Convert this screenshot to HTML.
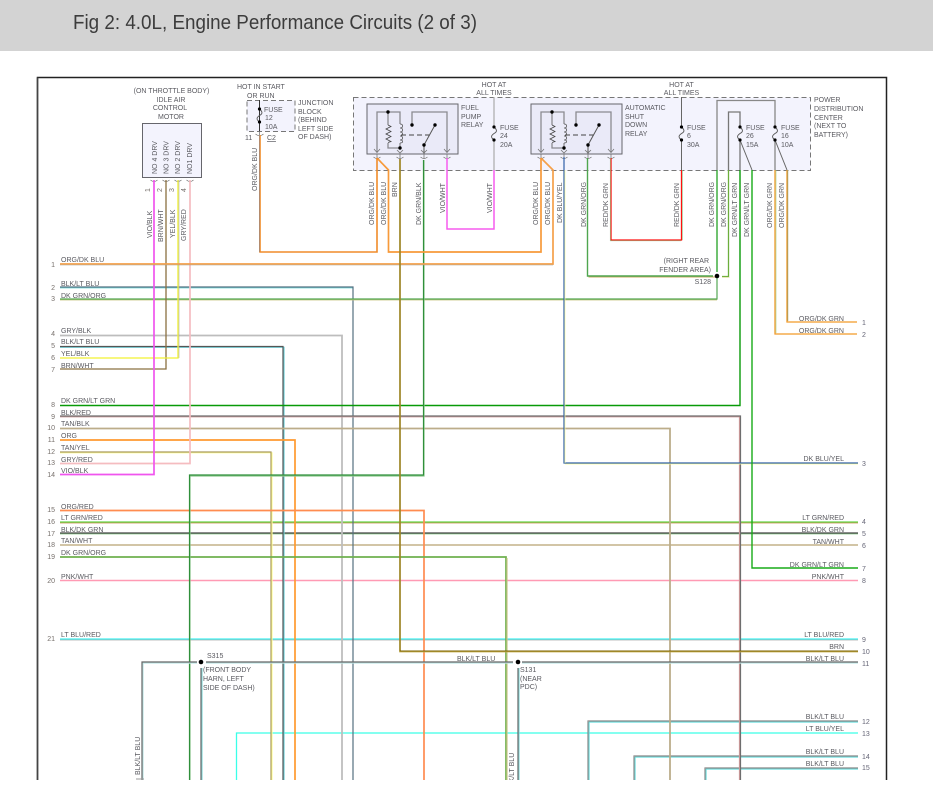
<!DOCTYPE html>
<html><head><meta charset="utf-8"><title>Fig 2</title>
<style>
html,body{margin:0;padding:0;background:#fff;width:933px;height:799px;overflow:hidden}
svg{display:block;position:absolute;left:0;top:0}
text{font-family:"Liberation Sans",sans-serif;font-size:7px;fill:#5a5a60}
path{fill:none;stroke-linejoin:miter}
.e{text-anchor:end}.m{text-anchor:middle}
.n{fill:#77706c;font-size:7px}
.r{fill:#667}
</style></head><body>
<svg width="933" height="799" viewBox="0 0 933 799" xmlns="http://www.w3.org/2000/svg">
<defs>
<g id="relay">
<rect x="367" y="104" width="91" height="50" fill="#eaeaf8" stroke="#66666c" stroke-width="1"/>
<path d="M377 152V112H400V124M400 143V148M388 112V125M388 143V148H400" stroke="#8a8a90" stroke-width="1.300"/>
<path d="M412 125V112H447V152" stroke="#8a8a90" stroke-width="1.300"/>
<path d="M388 125l3 1.500l-5 2.500l5 2.500l-5 2.500l5 2.500l-5 2.500l5 2.500l-3 1" stroke="#444" stroke-width=".8"/>
<path d="M400 124c3.500 0 3.500 4 0 4c3.500 0 3.500 4 0 4c3.500 0 3.500 4 0 4c3.500 0 3.500 4 0 4c3.500 0 3.500 3 0 3" stroke="#555" stroke-width=".8"/>
<path d="M401 135H432" stroke="#444" stroke-width="1" stroke-dasharray="5 3"/>
<path d="M424 145L435 125M424 145V154" stroke="#555" stroke-width="1"/>
<circle cx="388" cy="112" r="1.700" fill="#000"/><circle cx="400" cy="148" r="1.700" fill="#000"/>
<circle cx="412" cy="125" r="1.700" fill="#000"/><circle cx="424" cy="145" r="1.700" fill="#000"/><circle cx="435" cy="125" r="1.700" fill="#000"/>
<path d="M374 149l3 3.500l3-3.500M397 150l3 3l3-3M421 150l3 3l3-3M444 149l3 3.500l3-3.500" stroke="#777" stroke-width=".8"/>
<path d="M373.500 157q3.500 3 7 0M396.500 157q3.500 3 7 0M420.500 157q3.500 3 7 0M443.500 157q3.500 3 7 0M377 154v5M400 154v5M424 154v5M447 154v5" stroke="#777" stroke-width=".8"/>
</g>
<g id="fuse">
<path d="M0 0c3.500 3 3 5 0 6.500c-3 2-3.500 4 0 6.500" stroke="#555" stroke-width=".9"/>
<circle cx="0" cy="0" r="1.600" fill="#000"/><circle cx="0" cy="13" r="1.600" fill="#000"/>
</g>
</defs>

<!-- header -->
<rect x="0" y="0" width="933" height="51" fill="#d3d3d3"/>
<text x="73" y="29" textLength="404" lengthAdjust="spacingAndGlyphs" style="font-size:20px;fill:#3c3c3c">Fig 2: 4.0L, Engine Performance Circuits (2 of 3)</text>

<!-- boxes -->
<rect x="353.500" y="97.500" width="457" height="73" fill="#f3f3fd" stroke="#777" stroke-width="1" stroke-dasharray="5 3"/>
<rect x="247" y="100.500" width="48" height="31" fill="#f3f3fd" stroke="#777" stroke-width="1" stroke-dasharray="5 3"/>
<rect x="142.500" y="123.500" width="59" height="54" fill="#f3f3fd" stroke="#66666c" stroke-width="1"/>
<use href="#relay"/>
<use href="#relay" x="164"/>

<!-- upper gray/dark feeds -->
<path d="M259.500 100V132" stroke="#333" stroke-width="1"/>
<path d="M494 97V127M494 140V170" stroke="#aaa" stroke-width="1.200"/>
<path d="M681.500 97V127M681.500 140V170" stroke="#666" stroke-width="1"/>
<path d="M717 170V100.500H775V127M775 140V170" stroke="#888" stroke-width="1.300"/>
<path d="M728.500 170V112H740V127M740 140V170" stroke="#777" stroke-width="1.300"/>
<path d="M740 140L752 170M775 140L787 170" stroke="#666" stroke-width="1"/>
<use href="#fuse" x="259.500" y="109"/>
<use href="#fuse" x="494" y="127"/>
<use href="#fuse" x="681.500" y="127"/>
<use href="#fuse" x="740" y="127"/>
<use href="#fuse" x="775" y="127"/>
<path d="M255.500 134q4 3.500 8 0M259.500 131v5M150.500 180q3.500 3 7 0M162.500 180q3.500 3 7 0M174.500 180q3.500 3 7 0M186.500 180q3.500 3 7 0" stroke="#777" stroke-width=".8"/>

<!-- wires: tracer underlay then main colour -->
<g stroke-width="1.200">
<!-- long horizontals to right -->
<path d="M60 522.800H858" stroke="#c98a4c"/><path d="M60 522H858" stroke="#66d84a"/>
<path d="M60 533.800H858" stroke="#8ccc8c"/><path d="M60 533H858" stroke="#444"/>
<path d="M60 545H858" stroke="#cbbd9a" stroke-width="1.800"/>
<path d="M60 580.500H858" stroke="#ff9ab4" stroke-width="1.400"/>
<path d="M60 639.800H858" stroke="#aaa"/><path d="M60 639H858" stroke="#44f2f2"/>
<!-- lower right -->
<path d="M236.500 780V733H858" stroke="#3affe8" stroke-width="1.300"/>
<path d="M589 722V780M589 722H858" stroke="#66dddd"/><path d="M588 780V721H858" stroke="#888"/>
<path d="M635 757V780M635 757H858" stroke="#66dddd"/><path d="M634 780V756H858" stroke="#888"/>
<path d="M706 769V780M706 769H858" stroke="#66dddd"/><path d="M705 780V768H858" stroke="#888"/>
<!-- left groups -->
<path d="M60 287.800H353" stroke="#70dada"/><path d="M60 287H353V780" stroke="#557080"/>
<path d="M60 299.800H717" stroke="#c4c27a"/><path d="M60 299H717V276" stroke="#55a855"/>
<path d="M60 335.500H342V780" stroke="#bdbdbd" stroke-width="1.800"/>
<path d="M60 347.300H284V780" stroke="#6fd0d8"/><path d="M60 346.500H283V780" stroke="#555"/>
<path d="M60 405.500H740V170" stroke="#089a08" stroke-width="1.400"/>
<path d="M60 416.800H739.500V780" stroke="#d09a9a"/><path d="M60 416H740.500V780" stroke="#6e6e6e"/>
<path d="M60 428.500H670V780" stroke="#bcad8a" stroke-width="1.800"/>
<path d="M60 440H295V780" stroke="#ff9a30" stroke-width="1.700"/>
<path d="M60 452.800H272V780" stroke="#ffff99"/><path d="M60 452H271V780" stroke="#a99b60"/>
<path d="M60 510.500H424V780" stroke="#ff8c50" stroke-width="1.700"/>
<path d="M60 557H506V780" stroke="#6fb04f" stroke-width="1.700"/><path d="M507 558V780" stroke="#c9c68a"/>
<path d="M60 463.500H190V180" stroke="#f5bcc0" stroke-width="1.700"/>
<path d="M60 369H166V180" stroke="#8a7040" stroke-width="1.300"/>
<path d="M60 358H178V180" stroke="#f2f230" stroke-width="1.300"/>
<path d="M179 180V358" stroke="#aaa" stroke-width=".6"/>
<path d="M190 780V476H424V160" stroke="#8fc98f"/><path d="M189.500 780V475H423.500V160" stroke="#2f8f3a"/>
<path d="M60 474.500H154V180" stroke="#f055ee" stroke-width="1.700"/>
<!-- org/dk blu -->
<path d="M60 264H553V170L541 158" stroke="#f5a04a" stroke-width="1.700"/>
<path d="M60 265H553" stroke="#a8a090" stroke-width=".6"/>
<path d="M541 158V252H388.500V170L377 158" stroke="#f79a3a" stroke-width="1.700"/>
<path d="M377 158V252H260V135" stroke="#f08c2a" stroke-width="1.600"/>
<path d="M259.300 135V252" stroke="#8a8a9a" stroke-width=".6"/>
<path d="M400 159V651.500H858" stroke="#c6b050" stroke-width="1.700"/>
<path d="M400 159V651H858" stroke="#7a6000" stroke-width=".9"/>
<path d="M447 158V229H494V170" stroke="#f65cee" stroke-width="1.500"/>
<path d="M565 463.800H858" stroke="#ffff99"/><path d="M564 157V463H858" stroke="#3060a8"/>
<path d="M565 170V463" stroke="#ffff99" stroke-width=".7"/>
<path d="M588.500 277H716" stroke="#cda860" stroke-width=".9"/>
<path d="M587.500 158V276H713" stroke="#4fa64f" stroke-width="1.400"/>
<path d="M611 158V240H681.500V170" stroke="#ff1010" stroke-width="1.300"/>
<path d="M610.300 158V240.800H681M682.400 170V240" stroke="#8ccc8c" stroke-width=".7" opacity=".9"/>
<path d="M717 170V272" stroke="#22a022" stroke-width="1.300"/>
<path d="M722 276.500H728.500V170" stroke="#6cae3c" stroke-width="1.300"/>
<path d="M722 277.300H729.500" stroke="#dd9" stroke-width=".7"/>
<path d="M752 170V568H858" stroke="#18ab18" stroke-width="1.400"/>
<path d="M775 170V334H857" stroke="#f29a28" stroke-width="1.300"/>
<path d="M776 170V333" stroke="#9ccc88" stroke-width=".6"/>
<path d="M787 170V322H857" stroke="#f29a28" stroke-width="1.300"/>
<path d="M787.800 170V321" stroke="#9c9c68" stroke-width=".8"/>
<!-- splice bus -->
<path d="M143 780V663H197M206 663H513M522 663H858" stroke="#bfe6e6"/>
<path d="M142 780V662H197M206 662H513M522 662H858" stroke="#666"/>
<path d="M202 668V780M519 668V780" stroke="#88dddd"/>
<path d="M201 668V780M518 668V780" stroke="#666"/>
</g>
<circle cx="201" cy="662" r="2.300" fill="#000"/><circle cx="518" cy="662" r="2.300" fill="#000"/><circle cx="717" cy="276" r="2.300" fill="#000"/>

<!-- left labels -->
<text x="61" y="262">ORG/DK BLU</text><text x="61" y="286">BLK/LT BLU</text><text x="61" y="298">DK GRN/ORG</text>
<text x="61" y="333">GRY/BLK</text><text x="61" y="344">BLK/LT BLU</text><text x="61" y="356">YEL/BLK</text><text x="61" y="368">BRN/WHT</text>
<text x="61" y="403">DK GRN/LT GRN</text><text x="61" y="415">BLK/RED</text><text x="61" y="426">TAN/BLK</text><text x="61" y="438">ORG</text><text x="61" y="450">TAN/YEL</text><text x="61" y="462">GRY/RED</text><text x="61" y="473">VIO/BLK</text>
<text x="61" y="509">ORG/RED</text><text x="61" y="520">LT GRN/RED</text><text x="61" y="532">BLK/DK GRN</text><text x="61" y="543">TAN/WHT</text><text x="61" y="555">DK GRN/ORG</text>
<text x="61" y="579">PNK/WHT</text><text x="61" y="637">LT BLU/RED</text>
<!-- left numbers -->
<g>
<text class="n e" x="55" y="267">1</text><text class="n e" x="55" y="290">2</text><text class="n e" x="55" y="301">3</text><text class="n e" x="55" y="336">4</text><text class="n e" x="55" y="348">5</text><text class="n e" x="55" y="360">6</text><text class="n e" x="55" y="372">7</text>
<text class="n e" x="55" y="407">8</text><text class="n e" x="55" y="419">9</text><text class="n e" x="55" y="430">10</text><text class="n e" x="55" y="442">11</text><text class="n e" x="55" y="454">12</text><text class="n e" x="55" y="465">13</text><text class="n e" x="55" y="477">14</text>
<text class="n e" x="55" y="512">15</text><text class="n e" x="55" y="524">16</text><text class="n e" x="55" y="536">17</text><text class="n e" x="55" y="547">18</text><text class="n e" x="55" y="559">19</text><text class="n e" x="55" y="583">20</text><text class="n e" x="55" y="641">21</text>
</g>
<!-- right labels -->
<text class="e" x="844" y="321">ORG/DK GRN</text><text class="e" x="844" y="333">ORG/DK GRN</text>
<text class="e" x="844" y="461">DK BLU/YEL</text><text class="e" x="844" y="520">LT GRN/RED</text><text class="e" x="844" y="532">BLK/DK GRN</text><text class="e" x="844" y="544">TAN/WHT</text><text class="e" x="844" y="567">DK GRN/LT GRN</text><text class="e" x="844" y="579">PNK/WHT</text>
<text class="e" x="844" y="637">LT BLU/RED</text><text class="e" x="844" y="649">BRN</text><text class="e" x="844" y="661">BLK/LT BLU</text>
<text class="e" x="844" y="719">BLK/LT BLU</text><text class="e" x="844" y="731">LT BLU/YEL</text><text class="e" x="844" y="754">BLK/LT BLU</text><text class="e" x="844" y="766">BLK/LT BLU</text>
<g>
<text class="n r" x="862" y="325">1</text><text class="n r" x="862" y="337">2</text><text class="n r" x="862" y="466">3</text><text class="n r" x="862" y="524">4</text><text class="n r" x="862" y="536">5</text><text class="n r" x="862" y="548">6</text><text class="n r" x="862" y="571">7</text><text class="n r" x="862" y="583">8</text>
<text class="n r" x="862" y="642">9</text><text class="n r" x="862" y="654">10</text><text class="n r" x="862" y="666">11</text><text class="n r" x="862" y="724">12</text><text class="n r" x="862" y="736">13</text><text class="n r" x="862" y="759">14</text><text class="n r" x="862" y="770">15</text>
</g>

<!-- top text -->
<text class="m" x="171.500" y="93">(ON THROTTLE BODY)</text><text class="m" x="171" y="102">IDLE AIR</text><text class="m" x="170" y="110">CONTROL</text><text class="m" x="171" y="119">MOTOR</text>
<text x="237" y="89">HOT IN START</text><text x="247" y="98">OR RUN</text>
<text x="298" y="105">JUNCTION</text><text x="298" y="114">BLOCK</text><text x="298" y="122">(BEHIND</text><text x="298" y="131">LEFT SIDE</text><text x="298" y="139">OF DASH)</text>
<text x="264" y="112">FUSE</text><text x="265" y="120">12</text><text x="265" y="129">10A</text><text x="245" y="140">11</text><text x="267" y="140" text-decoration="underline">C2</text>
<text class="m" x="494" y="87">HOT AT</text><text class="m" x="494" y="95">ALL TIMES</text>
<text class="m" x="681.500" y="87">HOT AT</text><text class="m" x="681.500" y="95">ALL TIMES</text>
<text x="461" y="110">FUEL</text><text x="461" y="119">PUMP</text><text x="461" y="127">RELAY</text>
<text x="500" y="130">FUSE</text><text x="500" y="138">24</text><text x="500" y="147">20A</text>
<text x="625" y="110">AUTOMATIC</text><text x="625" y="119">SHUT</text><text x="625" y="127">DOWN</text><text x="625" y="136">RELAY</text>
<text x="687" y="130">FUSE</text><text x="687" y="138">6</text><text x="687" y="147">30A</text>
<text x="746" y="130">FUSE</text><text x="746" y="138">26</text><text x="746" y="147">15A</text>
<text x="781" y="130">FUSE</text><text x="781" y="138">16</text><text x="781" y="147">10A</text>
<text x="814" y="102">POWER</text><text x="814" y="111">DISTRIBUTION</text><text x="814" y="120">CENTER</text><text x="814" y="128">(NEXT TO</text><text x="814" y="137">BATTERY)</text>
<text class="e" x="709" y="263">(RIGHT REAR</text><text class="e" x="711" y="272">FENDER AREA)</text><text class="e" x="711" y="284">S128</text>
<text x="207" y="658">S315</text><text x="203" y="672">(FRONT BODY</text><text x="203" y="681">HARN, LEFT</text><text x="203" y="690">SIDE OF DASH)</text>
<text x="457" y="661">BLK/LT BLU</text><text x="520" y="672">S131</text><text x="520" y="681">(NEAR</text><text x="520" y="689">PDC)</text>

<!-- rotated labels -->
<text transform="rotate(-90 157 174)" x="157" y="174">NO 4 DRV</text><text transform="rotate(-90 168.500 174)" x="168.500" y="174">NO 3 DRV</text><text transform="rotate(-90 180 174)" x="180" y="174">NO 2 DRV</text><text transform="rotate(-90 192 174)" x="192" y="174">NO1 DRV</text>
<text class="n" transform="rotate(-90 150 192)" x="150" y="192">1</text><text class="n" transform="rotate(-90 162 192)" x="162" y="192">2</text><text class="n" transform="rotate(-90 174 192)" x="174" y="192">3</text><text class="n" transform="rotate(-90 186 192)" x="186" y="192">4</text>
<text transform="rotate(-90 152 238)" x="152" y="238">VIO/BLK</text><text transform="rotate(-90 163 242)" x="163" y="242">BRN/WHT</text><text transform="rotate(-90 175 238)" x="175" y="238">YEL/BLK</text><text transform="rotate(-90 186 241)" x="186" y="241">GRY/RED</text>
<text transform="rotate(-90 257 191)" x="257" y="191">ORG/DK BLU</text>
<text transform="rotate(-90 374 225)" x="374" y="225">ORG/DK BLU</text><text transform="rotate(-90 386 225)" x="386" y="225">ORG/DK BLU</text><text transform="rotate(-90 397 197)" x="397" y="197">BRN</text><text transform="rotate(-90 421 225)" x="421" y="225">DK GRN/BLK</text><text transform="rotate(-90 445 213)" x="445" y="213">VIO/WHT</text><text transform="rotate(-90 492 213)" x="492" y="213">VIO/WHT</text>
<text transform="rotate(-90 538 225)" x="538" y="225">ORG/DK BLU</text><text transform="rotate(-90 550 225)" x="550" y="225">ORG/DK BLU</text><text transform="rotate(-90 562 223)" x="562" y="223">DK BLU/YEL</text><text transform="rotate(-90 586 227)" x="586" y="227">DK GRN/ORG</text><text transform="rotate(-90 608 227)" x="608" y="227">RED/DK GRN</text>
<text transform="rotate(-90 679 227)" x="679" y="227">RED/DK GRN</text><text transform="rotate(-90 714 227)" x="714" y="227">DK GRN/ORG</text><text transform="rotate(-90 726 227)" x="726" y="227">DK GRN/ORG</text><text transform="rotate(-90 737 237)" x="737" y="237">DK GRN/LT GRN</text><text transform="rotate(-90 749 237)" x="749" y="237">DK GRN/LT GRN</text><text transform="rotate(-90 772 228)" x="772" y="228">ORG/DK GRN</text><text transform="rotate(-90 784 228)" x="784" y="228">ORG/DK GRN</text>
<text transform="rotate(-90 140 775)" x="140" y="775">BLK/LT BLU</text><text transform="rotate(-90 514 791)" x="514" y="791">BLK/LT BLU</text>
<path d="M136 779h8" stroke="#999" stroke-width="1"/>

<!-- frame and bottom mask -->
<rect x="0" y="780" width="933" height="19" fill="#fff"/>
<path d="M37.500 780V77.500H886.500V780" stroke="#222" stroke-width="1.500"/>
<path d="M37.500 77.500V780" stroke="#444" stroke-width="1.500"/>
</svg>
</body></html>
